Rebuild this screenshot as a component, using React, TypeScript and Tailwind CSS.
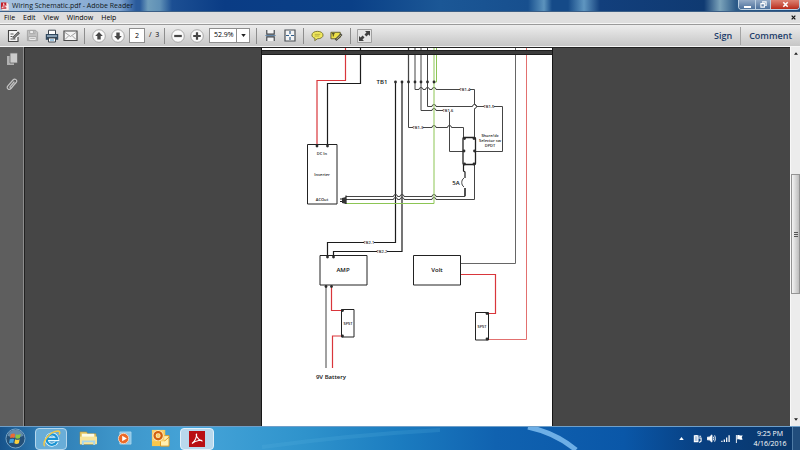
import type { ReactNode } from "react";

const menus = ["File", "Edit", "View", "Window", "Help"];

function ToolButton({ label, children }: { label: string; children: ReactNode }) {
  return (
    <button aria-label={label} className="flex h-5 w-[19px] shrink-0 items-center justify-center">
      {children}
    </button>
  );
}

function Divider() {
  return <span className="mx-1 h-4 w-px shrink-0 bg-[#8d8d8d]" />;
}

function RoundIcon({ children }: { children: ReactNode }) {
  return (
    <svg viewBox="0 0 14 14" className="size-3.5">
      <circle cx="7" cy="7" r="6.3" fill="#fafafa" stroke="#a2a2a2" strokeWidth="0.9" />
      <g fill="#474747">{children}</g>
    </svg>
  );
}

function TitleBar() {
  return (
    <header className="flex h-3 shrink-0 items-start justify-between border-b border-[#3c5f86] bg-[linear-gradient(90deg,#a9c4e0_0%,#93b4d8_8%,#7ea3cf_15%,#2a5b9c_17%,#2a5b9c_17.500%,#6f9dbb_18.500%,#5f90b6_20%,#1c4f93_21.500%,#0a3c85_28%,#0a4087_44%,#1b5796_55%,#174f8e_66%,#5c93bd_68%,#154a88_69%,#154a88_71%,#5f96c0_73%,#123f7c_75%,#0f3a72_88%,#7ba3ba_90%,#2c5a88_92%,#1d4a7c_100%)]">
      <div className="flex h-3 items-center gap-[3px]">
        <svg viewBox="0 0 9 11" className="ml-px h-[11px] w-2">
          <path d="M1 1h6l2 2v7H1z" fill="#f6efed" stroke="#a89a9a" strokeWidth=".5" />
          <path d="M0 1h6v7H0z" fill="#c3202a" />
          <path d="M1 7c2-2 2-4 2-5 0 2 2 3 4 4-2-.4-4 0-6 1z" fill="none" stroke="#fff" strokeWidth=".8" />
        </svg>
        <h1 className="text-[7px] leading-3 font-medium whitespace-nowrap text-[#101820]">
          Wiring Schematic.pdf - Adobe Reader
        </h1>
      </div>
      <div className="flex h-[10px] overflow-hidden rounded-b-sm border border-t-0 border-[#bcd0e2]">
        <button aria-label="Minimize" className="flex w-4 items-center justify-center bg-linear-to-b from-[#93aac6] to-[#4d719c]">
          <span className="mt-1 h-0.5 w-[7px] bg-white" />
        </button>
        <button aria-label="Restore" className="flex w-4 items-center justify-center border-x border-[#bcd0e2] bg-linear-to-b from-[#93aac6] to-[#4d719c]">
          <svg viewBox="0 0 8 8" className="size-[7px]" fill="none" stroke="#fff" strokeWidth="1.2">
            <path d="M3 2V1h4v4H6" />
            <path d="M1 3h4v4H1z" />
          </svg>
        </button>
        <button aria-label="Close" className="flex w-7 items-center justify-center bg-linear-to-b from-[#dc8172] to-[#b92718]">
          <svg viewBox="0 0 8 8" className="size-[7px]" stroke="#fff" strokeWidth="1.8">
            <path d="M1.5 1.5l5 5M6.5 1.5l-5 5" />
          </svg>
        </button>
      </div>
    </header>
  );
}

function MenuBar() {
  return (
    <nav className="flex h-3 shrink-0 items-center justify-between border-b border-[#f5f5f5] bg-[#dedede] px-1">
      <div className="flex gap-2">
        {menus.map((m) => (
          <button key={m} className="text-[7px] leading-[11px] font-medium text-black">
            {m}
          </button>
        ))}
      </div>
      <button aria-label="Close document">
        <svg viewBox="0 0 6 6" className="size-[5px]" stroke="#111" strokeWidth="1.5">
          <path d="M.8.8l4.4 4.4M5.2.8L.8 5.2" />
        </svg>
      </button>
    </nav>
  );
}

function ToolBar() {
  return (
    <div className="flex h-[23px] shrink-0 items-center border-t border-[#9a9a9a] border-b border-b-[#f4f4f4] bg-linear-to-b from-[#ededed] to-[#c6c6c6] pl-1">
      <ToolButton label="Edit">
        <svg viewBox="0 0 14 14" className="size-3.5" fill="none" stroke="#454545">
          <path d="M11 8v4.5H1.5v-11H10" fill="#f5f5f5" strokeWidth="1.1" />
          <path d="M3.5 5h3M3.5 7.5h2M3.5 10h5" strokeWidth=".9" />
          <path d="M6.2 9.2L12 3.4" strokeWidth="2.5" />
          <path d="M6.6 8.8L11.6 3.8" stroke="#ddd" strokeWidth=".7" />
        </svg>
      </ToolButton>
      <ToolButton label="Save">
        <svg viewBox="0 0 14 14" className="size-[13px]" stroke="#a4a4a4">
          <path d="M1.5 1.5h9l2 2v9h-11z" fill="#c2c2c2" />
          <path d="M4 1.5h5.5V5H4zM3 8h8v4.5H3z" fill="#eee" />
          <path d="M8 2v2.5M4.5 10h5" />
        </svg>
      </ToolButton>
      <ToolButton label="Print">
        <svg viewBox="0 0 14 14" className="size-3.5">
          <path d="M3.5 5V1.2h7V5" fill="#fff" stroke="#3c444d" />
          <path d="M.8 5h12.4v5.8H.8z" fill="#31495f" />
          <path d="M2 6.2h10v1.6H2z" fill="#9db4c8" />
          <path d="M3.5 9h7v4h-7z" fill="#fff" stroke="#3c444d" />
          <path d="M5 11h4" stroke="#3c8bc4" />
        </svg>
      </ToolButton>
      <ToolButton label="Email">
        <svg viewBox="0 0 15 12" className="h-3 w-[15px]" fill="#f4f4f4" stroke="#4b4b4b">
          <path d="M1 1h13v9.5H1z" strokeWidth="1.2" />
          <path d="M2 2.5l5.500 4 5.500-4M2 9.500l3.600-3.600M13 9.500L9.400 5.900" fill="none" stroke="#8a8a8a" strokeWidth=".8" />
        </svg>
      </ToolButton>
      <Divider />
      <ToolButton label="Previous page">
        <RoundIcon>
          <path d="M7 3l3.800 4H8.700v3.500H5.300V7H3.200z" />
        </RoundIcon>
      </ToolButton>
      <ToolButton label="Next page">
        <RoundIcon>
          <path d="M7 11L3.200 7h2.100V3.500h3.400V7h2.100z" />
        </RoundIcon>
      </ToolButton>
      <input aria-label="Page number" defaultValue="2" className="ml-0.5 h-[15px] w-4 rounded-none border border-[#8f8f8f] bg-white p-0 text-center text-[7px] font-medium" />
      <span className="ml-1 w-[15px] shrink-0 text-[7px] font-medium whitespace-nowrap">/&nbsp; 3</span>
      <span className="mr-[3px] h-4 w-px bg-[#8d8d8d]" />
      <ToolButton label="Zoom out">
        <RoundIcon>
          <path d="M3.200 5.900h7.600v2.200H3.200z" />
        </RoundIcon>
      </ToolButton>
      <ToolButton label="Zoom in">
        <RoundIcon>
          <path d="M3.200 5.900h2.700V3.200h2.200v2.700h2.700v2.200H8.100v2.700H5.900V8.100H3.200z" />
        </RoundIcon>
      </ToolButton>
      <div className="ml-[3px] grid h-[15px] w-[41px] shrink-0 grid-cols-[1fr_13px] border border-[#8f8f8f] bg-white">
        <select aria-label="Zoom level" className="col-span-2 col-start-1 row-start-1 appearance-none pl-1 text-[7px] font-medium">
          <option>52.9%</option>
        </select>
        <span className="pointer-events-none col-start-2 row-start-1 flex items-center justify-center border-l border-[#8f8f8f]">
          <svg viewBox="0 0 6 4" className="h-[3px] w-[5px]">
            <path d="M0 0h6L3 4z" fill="#222" />
          </svg>
        </span>
      </div>
      <span className="mr-1 ml-1.5 h-4 w-px bg-[#8d8d8d]" />
      <ToolButton label="Fit width">
        <svg viewBox="0 0 14 14" className="size-[13px]" fill="#f3f3f3" stroke="#3d4248" strokeWidth="1.200">
          <path d="M3 1v4.500h8V1M3 13V8.500h8V13" />
          <path d="M1.500 7h11" stroke="#3c6c98" strokeWidth=".8" />
        </svg>
      </ToolButton>
      <ToolButton label="Fit page">
        <svg viewBox="0 0 12 13" className="h-[13px] w-3" fill="#f3f3f3" stroke="#4b5157">
          <path d="M1 1h10v11H1z" strokeWidth="1.200" />
          <path d="M6 2v3M6 8v3M2 6.500h3M7 6.500h3" stroke="#2f5f8d" strokeWidth="1.200" />
        </svg>
      </ToolButton>
      <Divider />
      <ToolButton label="Add note">
        <svg viewBox="0 0 14 12" className="h-3 w-[13px]">
          <path d="M7 1c3.500 0 6 1.600 6 4s-2.500 4-6 4l-3 2 .3-2.500C2 7.800 1 6.600 1 5c0-2.400 2.500-4 6-4z" fill="#f0e85d" stroke="#68652d" strokeWidth=".9" />
          <path d="M4 4.200h6M4 6h5" stroke="#a69d36" strokeWidth=".8" />
        </svg>
      </ToolButton>
      <ToolButton label="Highlight text">
        <svg viewBox="0 0 14 12" className="h-3 w-[13px]">
          <path d="M1 2h10v5.500L8 9H1z" fill="#ece047" stroke="#5c5a2c" />
          <path d="M3.500 3.500v3M2 3.500h3" stroke="#34331f" />
          <path d="M6 10.500L12.500 4" stroke="#41413c" strokeWidth="2.600" />
          <path d="M6.800 9.700l5-5" stroke="#f4ef9a" strokeWidth=".8" />
        </svg>
      </ToolButton>
      <Divider />
      <ToolButton label="Read mode">
        <svg viewBox="0 0 15 14" className="h-3.5 w-[15px]">
          <path d="M.5.5h14v13H.5z" fill="#e4e4e4" stroke="#a0a0a0" />
          <path d="M13 2v5l-1.600-1.600-2 2-1.900-1.900 2-2L8 2zM2 12V7l1.600 1.600 2-2 1.900 1.900-2 2L7 12z" fill="#404040" />
        </svg>
      </ToolButton>
      <div className="ml-auto flex items-center pr-2 text-[9px] leading-[18px] font-semibold text-[#1c3c6a]">
        <button>Sign</button>
        <span className="mx-2 h-[18px] w-px bg-[#a4a4a4]" />
        <button>Comment</button>
      </div>
    </div>
  );
}

const terminals = [
  [395.5, 82], [402, 82], [408.5, 82], [415, 82], [421, 82], [427.5, 82], [434, 82],
  [464.5, 138.5], [474, 138.5], [464, 151], [474.5, 151], [464.5, 164], [474, 164],
  [317, 146], [327.5, 146], [327.5, 257], [333.5, 257], [326, 286.5], [331.5, 286.5],
  [342.5, 310.5], [342.5, 336], [487, 313.5], [487, 339],
];

const blackWires = [
  "M360.500 47V83.500H327.500V145",
  "M395.500 82V242.500H327.500V257",
  "M402 82V251.500H333.500V257",
];

const thinWires = [
  "M408.500 47V127.500H432a2 2 0 0 1 4 0H447.500a2 2 0 0 1 4 0H463.500V138",
  "M415 47V89.500H419a2 2 0 0 1 4 0H425.500a2 2 0 0 1 4 0H432a2 2 0 0 1 4 0H474.500V104.500a2 2 0 0 1 0 4V138",
  "M427.500 47V106.500H432a2 2 0 0 1 4 0H472.500a2 2 0 0 1 4 0H502.500V151.500H475",
  "M421 47V110.500H432a2 2 0 0 1 4 0H449.500V151.500H464",
  "M465 188V196.500H436a2 2 0 0 0-4 0H404a2 2 0 0 0-4 0H397.500a2 2 0 0 0-4 0H346",
  "M474.500 164V199.500H436a2 2 0 0 0-4 0H404a2 2 0 0 0-4 0H397.500a2 2 0 0 0-4 0H346",
  "M326 286V368",
];

const wireLabels: [number, number, string][] = [
  [465, 91, "TB1-4"],
  [489, 108, "TB1-5"],
  [448, 112, "TB1-6"],
  [418, 129, "TB1-3"],
  [369, 244, "TB2-1"],
  [382, 253, "TB2-2"],
];

function Schematic() {
  return (
    <svg viewBox="262 48 290 379" className="block h-[379px] w-full" fill="none" role="img" aria-label="Wiring schematic">
      <g stroke="#1c1c1c" strokeWidth="1.200">
        {blackWires.map((d) => (
          <path key={d} d={d} />
        ))}
        <path d="M408.500 47V82" />
      </g>
      <g stroke="#454545">
        {thinWires.map((d) => (
          <path key={d} d={d} />
        ))}
        <path d="M515.500 47V263.500H460.500" stroke="#666" />
      </g>
      <g stroke="#8cc554">
        <path d="M436.500 47V82H434M434 47V203.500H346" />
      </g>
      <g stroke="#d9363b" strokeWidth="1.200">
        <path d="M345.500 47V80.500H317V145" />
        <path d="M331.500 286V310.500H342M342 336H332.500V368" />
        <path d="M460.500 274.500H495.500V313.500H487" />
        <path d="M526.500 47V339.500H487" stroke="#e2706f" strokeWidth="1" />
      </g>
      <g stroke="#222" fill="#fff">
        <path d="M307.500 144.500h29.500v59.500h-29.500z" />
        <path d="M320 255.500h47v29.500h-47z" />
        <path d="M413.500 255.500h47v29.500h-47z" />
        <path d="M341.500 309.500h12.500v27.500h-12.500z" />
        <path d="M475.500 312.500h13v27.500h-13z" />
        <rect x="463" y="137.500" width="12.500" height="27" rx="1" strokeWidth="1.300" />
      </g>
      <path d="M463.500 165V171l1.500 1V178M465 188V196" stroke="#1c1c1c" strokeWidth="1.200" />
      <path d="M464 178c-3 2-3 7 0 9" stroke="#444" />
      <path d="M346 195.500V204M340 199h3M340 201.500h3" stroke="#222" strokeWidth="1.200" />
      <path d="M342 198l4-1v7l-4-1z" fill="#333" />
      <g fill="#2c2c2c">
        {terminals.map(([x, y]) => (
          <circle key={`${x}-${y}`} cx={x} cy={y} r="1.400" />
        ))}
      </g>
      <path d="M262 50H552V55H262z" fill="#3c3c3c" />
      <path d="M262 50.500H552M262 54.500H552" stroke="#1f1f1f" />
      <g fill="#fff">
        {wireLabels.map(([x, y]) => (
          <path key={`${x}-${y}`} d={`M${x - 5} ${y - 4}h10v4h-10z`} />
        ))}
      </g>
      <g fill="#1a1a1a" textAnchor="middle" className="text-[4px] font-semibold">
        {wireLabels.map(([x, y, label]) => (
          <text key={label} x={x} y={y}>
            {label}
          </text>
        ))}
        <text x="322" y="155">DC In</text>
        <text x="322" y="176">Inverter</text>
        <text x="322" y="201">ACOut</text>
        <text x="490" y="137">Shore/dc</text>
        <text x="490" y="142">Selector sw</text>
        <text x="490" y="147">DPDT</text>
        <text x="348" y="325">SPST</text>
        <text x="482" y="328">SPST</text>
      </g>
      <g fill="#111" textAnchor="middle" className="text-[6px] font-semibold">
        <text x="382" y="84">TB1</text>
        <text x="456" y="185">5A</text>
        <text x="343" y="272">AMP</text>
        <text x="437" y="272">Volt</text>
        <text x="331" y="379">9V Battery</text>
      </g>
    </svg>
  );
}

function Workspace() {
  return (
    <main className="flex min-h-0 flex-1 bg-[#464646]">
      <aside className="flex w-6 shrink-0 flex-col items-center gap-3 border-r border-[#8d8d8d] bg-[#5e5e5e] pt-[5px] shadow-[1px_0_0_#222]">
        <button aria-label="Page thumbnails">
          <svg viewBox="0 0 12 14" className="h-[14px] w-3">
            <path d="M1 4h7v9H1z" fill="#b1b1b1" />
            <path d="M4 1h7.500v10H4z" fill="#cbcbcb" stroke="#6b6b6b" strokeWidth=".8" />
          </svg>
        </button>
        <button aria-label="Attachments">
          <svg viewBox="0 0 12 13" className="h-[13px] w-3" fill="none" stroke="#c3c3c3" strokeWidth="1.200" strokeLinecap="round">
            <path d="M9.500 5L5 10.500c-1.800 2-5 0-3.300-2.300L7 2c1.900-2 5 .2 3.300 2.400L5.700 9.700c-1 1-2.300 0-1.500-1L8 4" />
          </svg>
        </button>
      </aside>
      <div className="min-w-0 flex-1 overflow-hidden border-t border-[#222]">
        <article className="mx-auto h-full w-[290px] bg-white shadow-[0_0_0_1px_#161616]">
          <Schematic />
        </article>
      </div>
      <div className="flex w-2.5 shrink-0 flex-col border-l border-[#f8f8f8] bg-[#ececec]">
        <button aria-label="Scroll up" className="flex h-3 items-center justify-center">
          <svg viewBox="0 0 6 4" className="h-[3px] w-1">
            <path d="M0 4h6L3 0z" fill="#222" />
          </svg>
        </button>
        <div className="flex-[116]" />
        <div className="flex flex-[118] flex-col items-center justify-center gap-px border border-[#949494] bg-linear-to-r from-[#f4f4f4] to-[#bdbdbd]">
          <span className="h-px w-1 bg-[#555]" />
          <span className="h-px w-1 bg-[#555]" />
          <span className="h-px w-1 bg-[#555]" />
        </div>
        <div className="flex-[121]" />
        <button aria-label="Scroll down" className="flex h-3 items-center justify-center">
          <svg viewBox="0 0 6 4" className="h-[3px] w-1">
            <path d="M0 0h6L3 4z" fill="#222" />
          </svg>
        </button>
      </div>
    </main>
  );
}

function TaskBar() {
  return (
    <footer className="grid h-6 shrink-0 grid-cols-1 border-t border-[#6f9fc9] bg-[linear-gradient(90deg,#17538b_0%,#2c78b0_5%,#3d94c8_14%,#45a4d8_24%,#2f93cc_38%,#1b7cc0_50%,#1062b0_62%,#0a57a8_78%,#083f80_88%,#0a3668_100%)]">
      <svg viewBox="0 0 800 23" preserveAspectRatio="none" className="col-start-1 row-start-1 h-[23px] w-full" fill="none">
        <path d="M528 0q28 6 48 23" stroke="#7fbdf0" strokeWidth="5" opacity=".85" />
        <path d="M262 20Q350 8 440 3" stroke="#58b2e2" strokeWidth="4" opacity=".2" />
      </svg>
      <div className="z-10 col-start-1 row-start-1 flex items-center">
        <button aria-label="Start" className="flex w-[30px] justify-center">
          <svg viewBox="0 0 22 22" className="size-[21px]">
            <circle cx="11" cy="11" r="10" fill="#234f77" stroke="#7aa7c8" />
            <path d="M2.500 8a9 9 0 0 1 17 0q-8 4-17 0z" fill="#8db3cf" opacity=".6" />
            <path d="M6 6.500q2.500-1.500 4.500-.3L9.800 10.500q-2-1-4.500.3z" fill="#ee6a32" />
            <path d="M11.500 6.500q2.500 1.200 5-.2l-1 4.400q-2.300 1-4.700 0z" fill="#8cc63e" />
            <path d="M5 11.800q2.300-1.200 4.500-.2l-.8 4.200q-2-1-4.500.3z" fill="#3fa2e0" />
            <path d="M10.600 11.800q2.400 1.200 4.800 0l-.9 4.300q-2.400 1.200-4.700 0z" fill="#fbd03c" />
          </svg>
        </button>
        <button aria-label="Internet Explorer" className="ml-[5px] flex h-[22px] w-8 items-center justify-center rounded-sm border border-[#b4d6ec] bg-[#69add8]">
          <svg viewBox="0 0 20 20" className="size-[19px]" fill="none">
            <path d="M15.500 13.500A5.500 5.500 0 1 1 16 10.500H6" stroke="#e9faff" strokeWidth="4" />
            <path d="M15.500 13.500A5.500 5.500 0 1 1 16 10.500H6" stroke="#1c94d4" strokeWidth="2.400" />
            <path d="M3 18C-1 15 8 2 17 2c2 .2 2 2 1 4" stroke="#f1c84a" strokeWidth="1.600" />
          </svg>
        </button>
        <button aria-label="Windows Explorer" className="ml-[3px] flex w-9 justify-center">
          <svg viewBox="0 0 20 18" className="h-[17px] w-[19px]">
            <path d="M1 2h7l1 2h9v11H1z" fill="#e7cb6b" stroke="#b98f34" strokeWidth=".6" />
            <path d="M3 4h13v5H3z" fill="#fafae9" />
            <path d="M1 7h18v8H1z" fill="#f8e49a" />
            <path d="M4 16v-4h12v4" fill="none" stroke="#a6d7ee" strokeWidth="2" />
          </svg>
        </button>
        <button aria-label="Media Player" className="flex w-9 justify-center">
          <svg viewBox="0 0 16 16" className="size-[15px]">
            <path d="M3 1h12v13H3z" fill="#8cc6e7" stroke="#b9dff0" strokeWidth=".7" />
            <circle cx="7" cy="8" r="5.500" fill="#ec6926" stroke="#f8d6be" />
            <path d="M5.500 5l5 3-5 3z" fill="#fff" />
          </svg>
        </button>
        <button aria-label="Outlook" className="flex w-9 justify-center">
          <svg viewBox="0 0 20 20" className="size-[19px]">
            <path d="M1 1h14v17H1z" fill="#f8c64b" />
            <path d="M10 7h9v11h-9z" fill="#fff0b2" stroke="#de9b20" />
            <path d="M10 8.500l4.500 4 4.500-4" fill="none" stroke="#de9b20" />
            <path d="M1 1h13v12H1z" fill="#f9d06a" />
            <circle cx="7.500" cy="7" r="3.800" fill="none" stroke="#fff3cf" strokeWidth="3.800" />
            <circle cx="7.500" cy="7" r="3.800" fill="none" stroke="#d2610f" strokeWidth="2.400" />
          </svg>
        </button>
        <button aria-label="Adobe Reader" className="ml-0.5 flex h-[22px] w-[34px] items-center justify-center rounded-sm border border-[#e1f1fb] bg-[#b9d8ec]">
          <svg viewBox="0 0 16 16" className="size-4">
            <path d="M0 0h16v16H0z" fill="#b90f13" />
            <path d="M3 12.500c3-2 5-7 4.600-9.500-1.200 0 .4 5.500 5.400 7 .5-1.300-6-.8-10 2.500z" fill="none" stroke="#fff" strokeWidth="1.100" />
          </svg>
        </button>
        <div className="ml-auto flex items-center gap-[5px] text-white">
          <button aria-label="Show hidden icons">
            <svg viewBox="0 0 6 4" className="mr-1 h-[3px] w-[5px]">
              <path d="M0 4h6L3 0z" fill="#fff" />
            </svg>
          </button>
          <svg viewBox="0 0 10 10" className="size-[9px]" fill="none" stroke="#fff" strokeWidth="1.200">
            <path d="M1.500 2h4v6.500h-4zM3.500 1v1" fill="#b9cbe0" />
            <path d="M6 4.500h3V8L7 9.500M7 2.500h2" />
          </svg>
          <svg viewBox="0 0 10 10" className="size-[9px]" fill="none" stroke="#fff">
            <path d="M.5 3.500h2l3-2.500v8l-3-2.500h-2z" fill="#fff" />
            <path d="M7 3q1.300 2 0 4M8.500 1.500q2 3.500 0 7" />
          </svg>
          <svg viewBox="0 0 10 10" className="size-[9px]" stroke="#fff" strokeWidth="1.400">
            <path d="M1 9V7.500M3.700 9V6M6.300 9V4M9 9V1.500" />
          </svg>
          <svg viewBox="0 0 10 10" className="size-[9px]">
            <path d="M1 1h1v9H1zM2.500 1.500c2-1 2.500 1 6 0L7.500 4l1 2c-3 1-4-1-6 0z" fill="#fff" />
          </svg>
          <time className="ml-1 w-[34px] text-center text-[7px] leading-[10px] whitespace-nowrap">
            9:25 PM
            <br />
            4/16/2016
          </time>
          <button aria-label="Show desktop" className="h-[23px] w-2 border-l border-[#4f7ba5] bg-[#214d7c]" />
        </div>
      </div>
    </footer>
  );
}

export default function App() {
  return (
    <div className="flex h-screen flex-col overflow-hidden bg-[#464646] font-['Open_Sans','Noto_Sans',sans-serif]">
      <TitleBar />
      <MenuBar />
      <ToolBar />
      <Workspace />
      <TaskBar />
    </div>
  );
}
